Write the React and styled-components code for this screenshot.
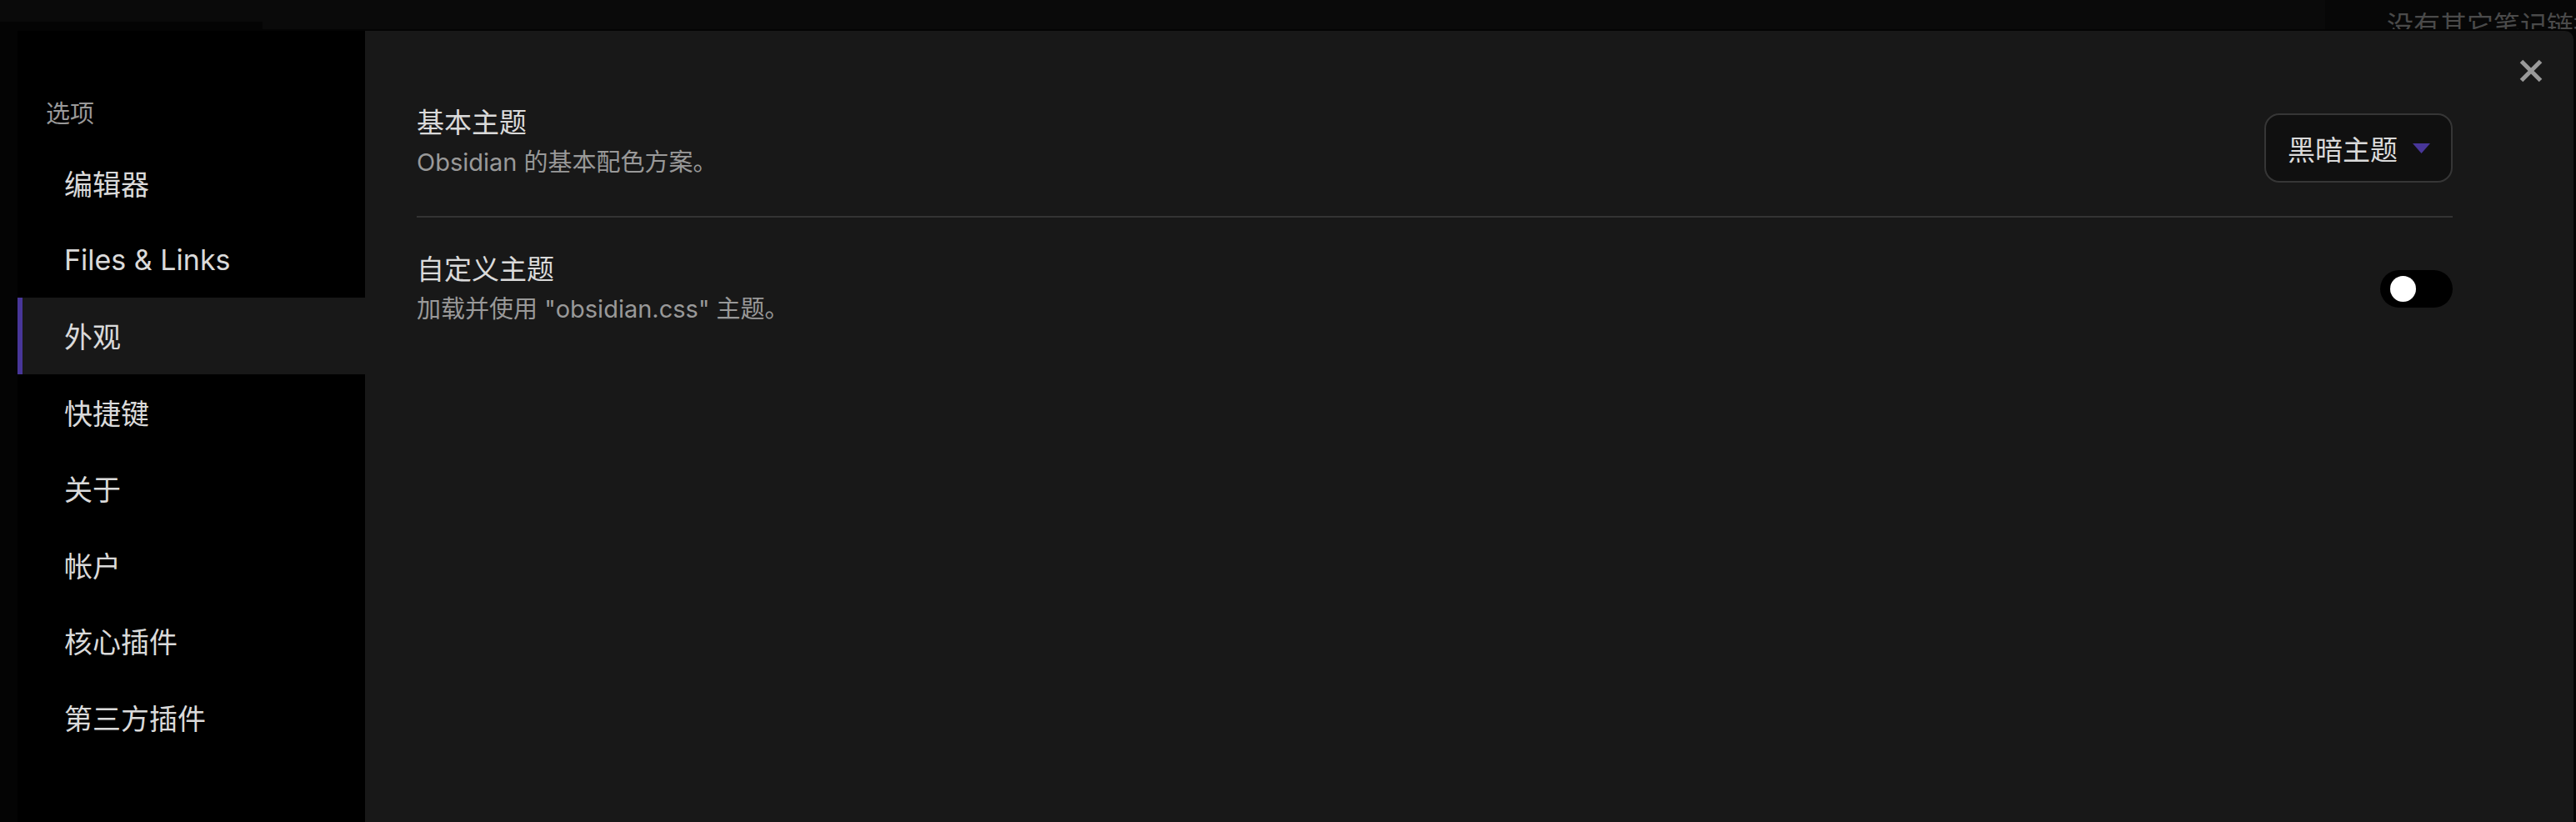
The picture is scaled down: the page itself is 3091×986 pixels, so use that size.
import styled, { createGlobalStyle } from 'styled-components';

const GlobalStyle = createGlobalStyle`
    html, body {
        margin: 0;
        padding: 0;
        background: #040404;
        overflow: hidden;
    }
    * {
        box-sizing: border-box;
    }
`;

const FONT = `"Inter", "Noto Sans CJK SC", "Noto Sans", sans-serif`;

const Page = styled.div`
    height: 100vh;
    display: flex;
    flex-direction: column;
    font-family: ${FONT};
`;

const TopStrip = styled.div`
    height: 37px;
    display: flex;
    align-items: flex-start;
    overflow: hidden;
    flex-shrink: 0;
`;

const StripBlock = styled.div`
    width: ${(p) => p.$width || 'auto'};
    flex: ${(p) => (p.$grow ? 1 : 'none')};
    height: ${(p) => p.$height}px;
    background: ${(p) => p.$bg};
`;

const StripNote = styled.div`
    width: 301px;
    height: 35px;
    background: #070707;
    padding: 12px 0 0 74px;
    overflow: hidden;
    white-space: nowrap;
    color: #4a4a4a;
    font-size: 32px;
    line-height: 38px;
`;

const Modal = styled.div`
    flex: 1;
    display: flex;
    margin: 0 3px 0 21px;
    border-top-right-radius: 10px;
    overflow: hidden;
    position: relative;
`;

const Sidebar = styled.nav`
    width: 417px;
    flex-shrink: 0;
    background: #000;
    padding-top: 80px;
    display: flex;
    flex-direction: column;
`;

const SidebarHeader = styled.div`
    font-size: 29px;
    line-height: 40px;
    color: #999;
    padding-left: 34px;
    margin-bottom: 17px;
`;

const NavItem = styled.div`
    height: 91.5px;
    flex-shrink: 0;
    display: flex;
    align-items: center;
    padding-left: 56px;
    font-size: 34px;
    color: #dadada;
    background: ${(p) => (p.$active ? '#181818' : 'transparent')};
    box-shadow: ${(p) => (p.$active ? 'inset 6px 0 0 #483699' : 'none')};
`;

const Content = styled.main`
    flex: 1;
    background: #181818;
    padding: 41px 145px 0 62px;
    position: relative;
`;

const CloseButton = styled.button`
    position: absolute;
    top: 34px;
    right: 37px;
    width: 28px;
    height: 28px;
    padding: 0;
    border: none;
    background: none;
    color: #999;
    display: flex;
`;

const SettingRow = styled.div`
    display: flex;
    align-items: center;
    justify-content: space-between;
    padding: 42px 0 40px;
    padding-top: ${(p) => (p.$first ? '42px' : '40px')};
    border-top: ${(p) => (p.$first ? 'none' : '2px solid #333')};
`;

const Info = styled.div`
    display: flex;
    flex-direction: column;
`;

const Name = styled.div`
    font-size: 33px;
    line-height: 44px;
    color: #dadada;
`;

const Desc = styled.div`
    font-size: 29px;
    line-height: 40px;
    color: #999;
    margin-top: 6px;
`;

const Dropdown = styled.div`
    margin-top: 16px;
    width: 226px;
    height: 83px;
    border: 2px solid #363636;
    border-radius: 18px;
    background: #101010;
    padding: 0 25px 0 26px;
    display: flex;
    align-items: center;
    justify-content: space-between;
    font-size: 33px;
    color: #dadada;
`;

const Toggle = styled.div`
    width: 87px;
    height: 45px;
    border-radius: 23px;
    background: #000;
    padding-left: 12px;
    display: flex;
    align-items: center;
`;

const Knob = styled.div`
    width: 31px;
    height: 31px;
    border-radius: 50%;
    background: #fff;
`;

const navItems = ['编辑器', 'Files & Links', '外观', '快捷键', '关于', '帐户', '核心插件', '第三方插件'];

const App = () => {
    return (
        <>
            <GlobalStyle />
            <Page>
                <TopStrip>
                    <StripBlock $width="315px" $height={26} $bg="#0a0a0a" />
                    <StripBlock $grow $height={35} $bg="#0a0a0a" />
                    <StripNote>没有其它笔记链接到此</StripNote>
                </TopStrip>
                <Modal>
                    <Sidebar>
                        <SidebarHeader>选项</SidebarHeader>
                        {navItems.map((item) => (
                            <NavItem key={item} $active={item === '外观'}>
                                {item}
                            </NavItem>
                        ))}
                    </Sidebar>
                    <Content>
                        <CloseButton aria-label="关闭">
                            <svg width="28" height="28" viewBox="0 0 28 28">
                                <path d="M2.5 2.5 L25.5 25.5 M25.5 2.5 L2.5 25.5" stroke="currentColor" strokeWidth="5" />
                            </svg>
                        </CloseButton>
                        <SettingRow $first>
                            <Info>
                                <Name>基本主题</Name>
                                <Desc>Obsidian 的基本配色方案。</Desc>
                            </Info>
                            <Dropdown>
                                <span>黑暗主题</span>
                                <svg width="21" height="12" viewBox="0 0 21 12">
                                    <polygon points="0,0 21,0 10.5,12" fill="#483699" />
                                </svg>
                            </Dropdown>
                        </SettingRow>
                        <SettingRow>
                            <Info>
                                <Name>自定义主题</Name>
                                <Desc>加载并使用 "obsidian.css" 主题。</Desc>
                            </Info>
                            <Toggle>
                                <Knob />
                            </Toggle>
                        </SettingRow>
                    </Content>
                </Modal>
            </Page>
        </>
    );
};

export default App;
